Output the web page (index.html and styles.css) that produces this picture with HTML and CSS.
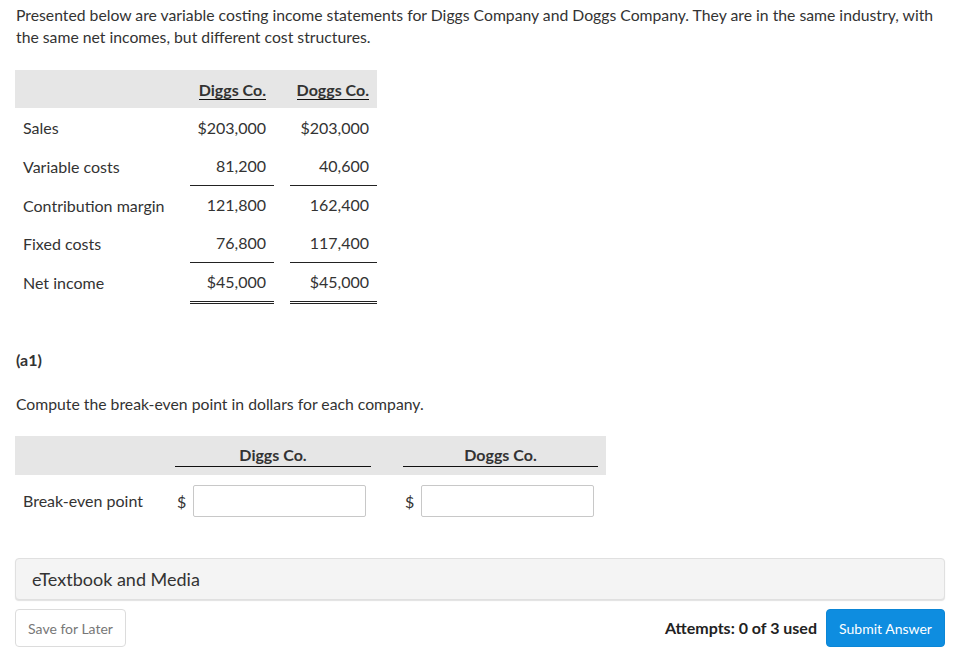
FILE: index.html
```html
<!DOCTYPE html>
<html lang="en">
<head>
<meta charset="utf-8">
<title>Break-even point</title>
<link rel="stylesheet" href="styles.css">
</head>
<body>
<div class="page">
  <p class="intro">Presented below are variable costing income statements for Diggs Company and Doggs Company. They are in the same industry, with the same net incomes, but different cost structures.</p>

  <div class="stmt">
    <div class="srow shead">
      <div class="slabel"></div>
      <div class="snum"><span class="uhead">Diggs Co.</span></div>
      <div class="snum"><span class="uhead">Doggs Co.</span></div>
    </div>
    <div class="srow first">
      <div class="slabel">Sales</div>
      <div class="snum">$203,000</div>
      <div class="snum">$203,000</div>
    </div>
    <div class="srow">
      <div class="slabel">Variable costs</div>
      <div class="snum single">81,200</div>
      <div class="snum single">40,600</div>
    </div>
    <div class="srow">
      <div class="slabel">Contribution margin</div>
      <div class="snum">121,800</div>
      <div class="snum">162,400</div>
    </div>
    <div class="srow">
      <div class="slabel">Fixed costs</div>
      <div class="snum single">76,800</div>
      <div class="snum single">117,400</div>
    </div>
    <div class="srow">
      <div class="slabel">Net income</div>
      <div class="snum double">$45,000</div>
      <div class="snum double">$45,000</div>
    </div>
  </div>

  <h3 class="part">(a1)</h3>
  <p class="task">Compute the break-even point in dollars for each company.</p>

  <div class="answer">
    <div class="arow ahead">
      <div class="alabel"></div>
      <div class="acol"><span>Diggs Co.</span></div>
      <div class="acol second"><span>Doggs Co.</span></div>
    </div>
    <div class="arow abody">
      <div class="alabel">Break-even point</div>
      <div class="acell"><span class="cur">$</span><input class="field" type="text" aria-label="Diggs Co. break-even point"></div>
      <div class="acell second"><span class="cur">$</span><input class="field" type="text" aria-label="Doggs Co. break-even point"></div>
    </div>
  </div>

  <div class="media">eTextbook and Media</div>

  <div class="actions">
    <button class="btn save" type="button">Save for Later</button>
    <div class="right">
      <span class="attempts">Attempts: 0 of 3 used</span>
      <button class="btn submit" type="button">Submit Answer</button>
    </div>
  </div>
</div>
</body>
</html>
```

FILE: styles.css
```css
* { box-sizing: border-box; }

body {
  margin: 0;
  background: #fff;
  color: #333;
  font-family: Lato, "Open Sans", Arial, sans-serif;
  font-size: 16px;
}

.page {
  padding: 4px 12px 0 15px;
}

.intro {
  margin: 0;
  line-height: 22px;
  padding-left: 1px;
  font-size: 15.75px;
}

/* Statement table */
.stmt {
  margin-top: 22px;
  width: 362px;
}

.srow {
  display: grid;
  grid-template-columns: 159px 84px 87px;
  column-gap: 16px;
}

.shead {
  background: #e6e6e6;
  height: 38px;
}

.shead .snum {
  font-weight: 700;
  padding-top: 11px;
  line-height: 18px;
}

.uhead {
  display: inline-block;
  border-bottom: 1.5px solid #111;
  line-height: 18px;
}

.slabel {
  padding-left: 8px;
  display: flex;
  align-items: center;
  height: 38px;
}

.snum {
  text-align: right;
  padding-right: 8px;
  height: 38px;
  line-height: 38px;
}

.srow.first .slabel,
.srow.first .snum {
  height: 39px;
  line-height: 39px;
}

.snum.single {
  border-bottom: 1px solid #222;
  height: 39px;
}

.snum.double {
  border-bottom: 3px double #222;
  height: 41px;
}

.part {
  margin: 45px 0 0;
  padding-left: 1px;
  font-size: 16px;
  font-weight: 700;
  line-height: 22px;
}

.task {
  margin: 22px 0 0;
  padding-left: 1px;
  line-height: 22px;
  font-size: 15.75px;
}

/* Answer table */
.answer {
  margin-top: 21px;
  width: 591px;
}

.arow {
  display: grid;
  grid-template-columns: 144px 196px 219px;
  column-gap: 8px;
  padding: 0 8px;
}

.arow > .second {
  margin-left: 24px;
}

.ahead {
  background: #e6e6e6;
  height: 39px;
}

.acol {
  text-align: center;
  font-weight: 700;
  border-bottom: 1.5px solid #111;
  height: 31px;
  line-height: 37px;
}

.abody {
  padding-top: 10px;
  align-items: center;
}

.alabel {
  line-height: 32px;
}

.acell {
  display: flex;
  align-items: center;
}

.cur {
  width: 18px;
  padding-left: 2px;
}

.field {
  width: 173px;
  height: 32px;
  border: 1px solid #c8c8c8;
  border-radius: 2px;
  font: inherit;
  padding: 0 6px;
  background: #fff;
}

/* eTextbook */
.media {
  margin-top: 41px;
  height: 42px;
  background: #f4f4f4;
  border: 1px solid #e0e0e0;
  border-radius: 4px;
  box-shadow: 0 1px 1px rgba(0, 0, 0, 0.12);
  padding-left: 16px;
  line-height: 40px;
  font-size: 18px;
  color: #333;
}

.actions {
  margin-top: 9px;
  display: flex;
  justify-content: space-between;
  align-items: center;
}

.right {
  display: flex;
  align-items: center;
  gap: 9px;
}

.btn {
  height: 38px;
  border-radius: 4px;
  font-family: Lato, "Open Sans", Arial, sans-serif;
  font-size: 14px;
  cursor: pointer;
}

.save {
  width: 111px;
  background: #fff;
  border: 1px solid #dcdcdc;
  color: #777;
  padding: 0;
}

.attempts {
  font-weight: 700;
  font-size: 16px;
  color: #222;
  position: relative;
  top: -1px;
}

.submit {
  width: 119px;
  background: #0e8de0;
  border: 1px solid #0b86d6;
  color: #fff;
  padding: 0;
}
```
